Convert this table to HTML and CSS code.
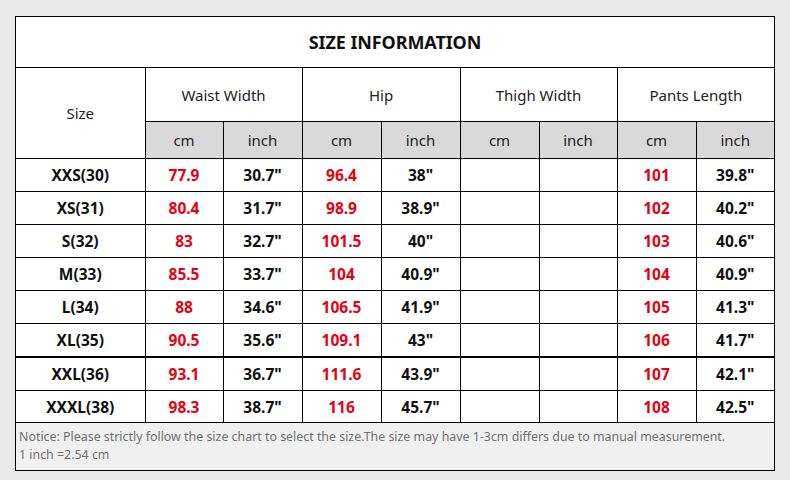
FILE: index.html
```html
<!DOCTYPE html>
<html>
<head>
<meta charset="utf-8">
<link rel="stylesheet" href="styles.css">
</head>
<body>
<div class="chart">
<table class="size-table">
<colgroup>
<col class="c129"><col class="c78"><col class="c79"><col class="c79"><col class="c79"><col class="c79"><col class="c78"><col class="c79"><col class="c78">
</colgroup>
<tr class="title-row"><td colspan="9" class="title">SIZE INFORMATION</td></tr>
<tr class="head-row">
<td rowspan="2" class="head">Size</td>
<td colspan="2" class="head">Waist Width</td>
<td colspan="2" class="head">Hip</td>
<td colspan="2" class="head">Thigh Width</td>
<td colspan="2" class="head">Pants Length</td>
</tr>
<tr class="unit-row">
<td>cm</td><td>inch</td><td>cm</td><td>inch</td><td>cm</td><td>inch</td><td>cm</td><td>inch</td>
</tr>
<tr class="data"><td>XXS(30)</td><td class="r">77.9</td><td>30.7"</td><td class="r">96.4</td><td>38"</td><td></td><td></td><td class="r">101</td><td>39.8"</td></tr>
<tr class="data"><td>XS(31)</td><td class="r">80.4</td><td>31.7"</td><td class="r">98.9</td><td>38.9"</td><td></td><td></td><td class="r">102</td><td>40.2"</td></tr>
<tr class="data"><td>S(32)</td><td class="r">83</td><td>32.7"</td><td class="r">101.5</td><td>40"</td><td></td><td></td><td class="r">103</td><td>40.6"</td></tr>
<tr class="data"><td>M(33)</td><td class="r">85.5</td><td>33.7"</td><td class="r">104</td><td>40.9"</td><td></td><td></td><td class="r">104</td><td>40.9"</td></tr>
<tr class="data"><td>L(34)</td><td class="r">88</td><td>34.6"</td><td class="r">106.5</td><td>41.9"</td><td></td><td></td><td class="r">105</td><td>41.3"</td></tr>
<tr class="data thick"><td>XL(35)</td><td class="r">90.5</td><td>35.6"</td><td class="r">109.1</td><td>43"</td><td></td><td></td><td class="r">106</td><td>41.7"</td></tr>
<tr class="data"><td>XXL(36)</td><td class="r">93.1</td><td>36.7"</td><td class="r">111.6</td><td>43.9"</td><td></td><td></td><td class="r">107</td><td>42.1"</td></tr>
<tr class="data last"><td>XXXL(38)</td><td class="r">98.3</td><td>38.7"</td><td class="r">116</td><td>45.7"</td><td></td><td></td><td class="r">108</td><td>42.5"</td></tr>
</table>
<div class="notice">
<p>Notice: Please strictly follow the size chart to select the size.The size may have 1-3cm differs due to manual measurement.</p>
<p>1 inch =2.54 cm</p>
</div>
</div>
</body>
</html>
```
FILE: styles.css
```css
html, body {
  margin: 0;
  padding: 0;
  background: #e9e9e9;
}
body {
  padding: 16px 0 0 15px;
  font-family: "Noto Sans", "Open Sans", sans-serif;
  color: #111;
}
.chart {
  width: 758px;
  border: 1px solid #000;
  background: #fff;
}
.size-table {
  width: 758px;
  border-collapse: collapse;
  table-layout: fixed;
}
.c129 { width: 129px; }
.c78 { width: 78px; }
.c79 { width: 79px; }
.size-table td {
  border: 1px solid #000;
  text-align: center;
  padding: 0;
  font-size: 15px;
}
.size-table tr:first-child td { border-top: none; }
.size-table td:first-child { border-left: none; }
.size-table td:last-child { border-right: none; }
.title-row td {
  height: 50px;
  font-size: 18px;
  font-weight: 700;
  letter-spacing: -0.1px;
}
.head-row td {
  height: 53px;
  font-weight: 400;
  color: #222;
}
.head-row td[rowspan] { border-left: none; }
.unit-row td {
  height: 36px;
  background: #d9d9d9;
  font-weight: 400;
  color: #222;
}
.data td {
  height: 32px;
  font-weight: 700;
  font-size: 15.5px;
}
.data.last td { height: 31px; }
.data.thick td { border-bottom: 2px solid #000; }
.data td.r { color: #e60012; }
.notice {
  background: #f0f0f0;
  height: 47px;
  padding: 5px 0 0 3px;
  box-sizing: border-box;
  font-size: 12.4px;
  color: #707070;
  line-height: 18px;
}
.notice p { margin: 0; }
```
